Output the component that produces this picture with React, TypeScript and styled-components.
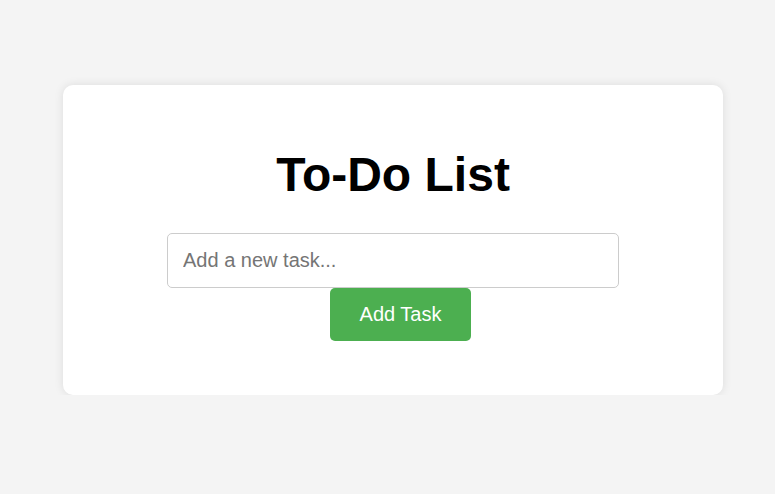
import React from "react";
import styled, { createGlobalStyle } from "styled-components";

const GlobalStyle = createGlobalStyle`
  html, body {
    margin: 0;
    padding: 0;
    background: #f4f4f4;
    font-family: "Liberation Sans", Arial, sans-serif;
  }
`;

const Page = styled.div`
  padding: 85px 0 0 63px;
`;

const Card = styled.div`
  box-sizing: border-box;
  width: 660px;
  height: 310px;
  background: #ffffff;
  border-radius: 10px;
  box-shadow: 0 0 10px rgba(0, 0, 0, 0.1);
  padding: 30px;
  display: flex;
  flex-direction: column;
  align-items: center;
`;

const Title = styled.h1`
  margin: 32px 0 31px;
  font-size: 48px;
  line-height: 55px;
  font-weight: bold;
  color: #000;
`;

const TaskInput = styled.input`
  box-sizing: border-box;
  width: 452px;
  height: 55px;
  padding: 0 15px;
  font-family: "Liberation Sans", Arial, sans-serif;
  font-size: 20px;
  border: 1px solid #ccc;
  border-radius: 5px;
  outline: none;
  &::placeholder {
    color: #757575;
  }
`;

const AddButton = styled.button`
  box-sizing: border-box;
  margin-left: 15px;
  width: 141px;
  height: 53px;
  background: #4caf50;
  color: #fff;
  border: none;
  border-radius: 5px;
  font-family: "Liberation Sans", Arial, sans-serif;
  font-size: 20px;
  cursor: pointer;
`;

export default function App() {
  return (
    <>
      <GlobalStyle />
      <Page>
        <Card>
          <Title>To-Do List</Title>
          <TaskInput placeholder="Add a new task..." />
          <AddButton>Add Task</AddButton>
        </Card>
      </Page>
    </>
  );
}
